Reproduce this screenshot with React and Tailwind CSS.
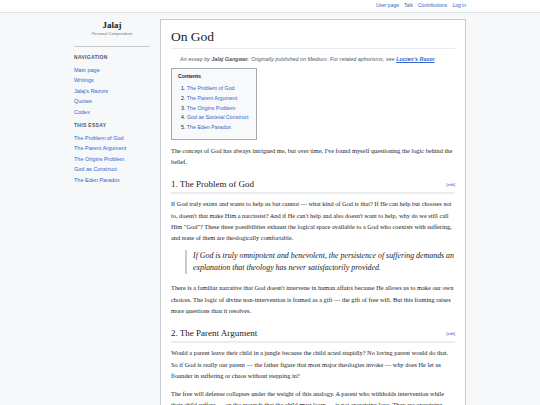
import React from 'react';

const NAV = ['Main page', 'Writings', "Jalaj's Razors", 'Quotes', 'Codex'];
const ESSAY = ['The Problem of God', 'The Parent Argument', 'The Origins Problem', 'God as Construct', 'The Eden Paradox'];
const TOC = ['The Problem of God', 'The Parent Argument', 'The Origins Problem', 'God as Societal Construct', 'The Eden Paradox'];

const serif = 'font-["Liberation_Serif",Georgia,serif]';
const sans = 'font-["Liberation_Sans",Arial,sans-serif]';

function SideGroup({ title, items }) {
  return (
    <div className="mt-[5px]">
      <div className="text-[5px] font-bold tracking-[0.3px] text-[#54595d] mb-[3px]">{title}</div>
      {items.map((it) => (
        <div key={it} className="text-[5.5px] leading-[10.5px] text-[#3366cc]">{it}</div>
      ))}
    </div>
  );
}

function Heading({ children }) {
  return (
    <div className="flex items-end justify-between border-b-2 border-[#eaecf0] pb-[1px] mt-[10px] mb-[4px]">
      <h2 className={`${serif} text-[9px] leading-[14px] text-[#202122]`}>{children}</h2>
      <span className={`${sans} text-[4px] text-[#3366cc] mb-[3px]`}>[edit]</span>
    </div>
  );
}

function P({ children, className = '' }) {
  return <p className={`text-[6.35px] leading-[11.3px] text-[#202122] mb-[7px] ${className}`}>{children}</p>;
}

export default function App() {
  return (
    <div className={`${sans} bg-[#f6f8fa] overflow-hidden h-[405px]`}>
      <header className="bg-white border-b border-[#dfe3e8] h-[13px]">
        <div className="w-[392px] mx-auto flex justify-end gap-[5px] pt-[2px] text-[5px] text-[#3366cc]">
          <span>User page</span>
          <span>Talk</span>
          <span>Contributions</span>
          <span>Log in</span>
        </div>
      </header>

      <div className="w-[392px] mx-auto flex">
        <aside className="w-[86px] shrink-0 pr-[10px] pt-[6px]">
          <div className="text-center">
            <div className={`${serif} text-[9px] font-bold text-[#202122] leading-[12px]`}>Jalaj</div>
            <div className="text-[4px] text-[#72777d] leading-[6px]">Personal Compendium</div>
          </div>
          <div className="border-t border-[#c8ccd1] mt-[9px] pt-[2px]">
            <SideGroup title="NAVIGATION" items={NAV} />
            <SideGroup title="THIS ESSAY" items={ESSAY} />
          </div>
        </aside>

        <main className={`${serif} w-[306px] bg-white border border-[#c8ccd1] mt-[6px] px-[10px] pt-[7px] min-h-[400px]`}>
          <h1 className="text-[13.5px] leading-[20px] text-[#202122] border-b border-[#eaecf0] pb-[1px]">On God</h1>
          <div className={`${sans} text-[5.45px] italic text-[#54595d] pl-[9px] mt-[6px]`}>
            An essay by <b>Jalaj Gangwar</b>. Originally published on Medium. For related aphorisms, see{' '}
            <span className="text-[#3366cc] underline font-bold">Lucien's Razor</span>.
          </div>

          <div className={`${sans} inline-block bg-[#f8f9fa] border border-[#a2a9b1] mt-[5px] pl-[6px] pr-[8px] pt-[4px] pb-[6px]`}>
            <div className="text-[5.3px] font-bold text-[#202122] mb-[3px]">Contents</div>
            <ol className="text-[5.3px] leading-[9.7px]">
              {TOC.map((t, i) => (
                <li key={t} className="pl-[3px]">
                  <span className="text-[#202122]">{i + 1}.</span> <span className="text-[#3366cc]">{t}</span>
                </li>
              ))}
            </ol>
          </div>

          <P className="mt-[5px]">
            The concept of God has always intrigued me, but over time, I've found myself questioning the logic behind the belief.
          </P>

          <Heading>1. The Problem of God</Heading>
          <P>
            If God truly exists and wants to help us but cannot — what kind of God is that? If He can help but chooses not to,
            doesn't that make Him a narcissist? And if He can't help and also doesn't want to help, why do we still call Him
            "God"? These three possibilities exhaust the logical space available to a God who coexists with suffering, and none
            of them are theologically comfortable.
          </P>
          <blockquote className="ml-[14px] border-l-2 border-[#c8ccd1] pl-[6px] mt-[5px] mb-[8px]">
            <p className="text-[7.9px] leading-[12px] italic text-[#202122]">
              If God is truly omnipotent and benevolent, the persistence of suffering demands an explanation that theology has
              never satisfactorily provided.
            </p>
          </blockquote>
          <P>
            There is a familiar narrative that God doesn't intervene in human affairs because He allows us to make our own
            choices. The logic of divine non-intervention is framed as a gift — the gift of free will. But this framing raises
            more questions than it resolves.
          </P>

          <Heading>2. The Parent Argument</Heading>
          <P>
            Would a parent leave their child in a jungle because the child acted stupidly? No loving parent would do that. So if
            God is really our parent — the father figure that most major theologies invoke — why does He let us flounder in
            suffering or chaos without stepping in?
          </P>
          <P>
            The free will defense collapses under the weight of this analogy. A parent who withholds intervention while their
            child suffers — on the grounds that the child must learn — is not exercising love. They are exercising control.
          </P>
        </main>
      </div>
    </div>
  );
}
